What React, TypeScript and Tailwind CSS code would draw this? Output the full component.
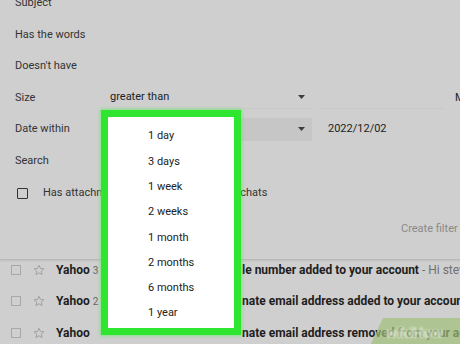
import React from "react";

const Arrow = () => (
  <svg width="7" height="4" viewBox="0 0 7 4" className="block">
    <polygon points="0,0 7,0 3.5,4" fill="#3d3d3d" />
  </svg>
);

const Star = () => (
  <svg width="12" height="12" viewBox="0 0 24 24" className="block">
    <polygon
      points="12,2.5 14.9,8.9 21.8,9.6 16.6,14.3 18.1,21.2 12,17.6 5.9,21.2 7.4,14.3 2.2,9.6 9.1,8.9"
      fill="none"
      stroke="#9c9c9c"
      strokeWidth="1.8"
      strokeLinejoin="round"
    />
  </svg>
);

const Row = ({ label, children }: { label: string; children?: React.ReactNode }) => (
  <div className="flex h-[31.5px] items-center">
    <div className="w-[110px] shrink-0 pl-[15px] text-[#333]">{label}</div>
    {children}
  </div>
);

const mails = [
  { n: "3", s: "le number added to your account", p: " - Hi steve, your Yahoo account" },
  { n: "2", s: "nate email address added to your account", p: " - Hi" },
  { n: "", s: "nate email address removed from your account", p: "" },
];

const items = ["1 day", "3 days", "1 week", "2 weeks", "1 month", "2 months", "6 months", "1 year"];

export default function App() {
  return (
    <div className="relative h-[344px] w-[460px] overflow-hidden bg-[#cfcfcf] font-['Roboto',sans-serif] text-[11px] text-[#2b2b2b]">
      <div className="relative z-10 -mt-[12.5px] border-b border-[#b8b8b8] bg-[#cfcfcf] pb-[9.5px] shadow-[0_1px_2px_rgba(0,0,0,0.08)]">
        <Row label="Subject" />
        <Row label="Has the words" />
        <Row label="Doesn't have" />
        <Row label="Size">
          <div className="flex h-[22px] w-[202px] shrink-0 items-center justify-between border-b border-[#c9c9c9] pr-[7px] text-[#222]">
            <span>greater than</span>
            <Arrow />
          </div>
          <div className="ml-[8px] h-[22px] w-[125px] shrink-0 border-b border-[#c9c9c9]" />
          <span className="ml-[10px] whitespace-nowrap text-[#222]">MB</span>
        </Row>
        <Row label="Date within">
          <div className="flex h-[23px] w-[202px] shrink-0 items-center justify-end bg-[#c6c6c6] pr-[7px]">
            <Arrow />
          </div>
          <span className="ml-[16px] whitespace-nowrap text-[#222]">2022/12/02</span>
        </Row>
        <Row label="Search">
          <span className="text-[#222]">All Mail</span>
        </Row>
        <div className="flex h-[33px] items-center pl-[17px]">
          <div className="flex w-[132px] shrink-0 items-center">
            <div className="h-[11px] w-[11px] rounded-[1px] border-[1.5px] border-[#333]" />
            <span className="ml-[15px] whitespace-nowrap text-[#333]">Has attachments</span>
          </div>
          <div className="h-[11px] w-[11px] rounded-[1px] border-[1.5px] border-[#333]" />
          <span className="ml-[15px] whitespace-nowrap text-[#333]">Don't include chats</span>
        </div>
        <div className="flex h-[40px] items-center whitespace-nowrap pl-[401px] text-[#8a8a8a]">
          Create filter
        </div>
      </div>

      <div className="-mt-[6px] text-[12px]">
        {mails.map((m, i) => (
          <div key={i} className="flex h-[31.5px] items-center whitespace-nowrap">
            <div className="ml-[11px] h-[10px] w-[10px] shrink-0 border border-[#a8a8a8]" />
            <div className="ml-[12px] shrink-0">
              <Star />
            </div>
            <div className="ml-[11px] w-[186px] shrink-0 font-bold text-[#1e1e1e]">
              Yahoo
              {m.n && <span className="ml-[3px] text-[10px] font-normal text-[#666]">{m.n}</span>}
            </div>
            <div className="text-[#1e1e1e]">
              <span className="font-bold">{m.s}</span>
              <span className="text-[#6f6f6f]">{m.p}</span>
            </div>
          </div>
        ))}
      </div>

      <div className="absolute left-[101px] top-[110px] z-20 h-[225px] w-[140px] border-[7px] border-[#2fe52f] bg-white shadow-[0_0_3px_1px_rgba(80,240,80,0.6)]">
        <div className="flex flex-col pl-[40px] pt-[7px]">
          {items.map((t) => (
            <div key={t} className="flex h-[25.3px] items-center whitespace-nowrap text-[#222]">
              {t}
            </div>
          ))}
        </div>
      </div>

      <div className="absolute left-[376px] top-[318px] z-30 flex h-[30px] w-[100px] -skew-x-[25deg] items-center bg-[#9fbf78]/70 pl-[10px]">
        <span className="skew-x-[25deg] whitespace-nowrap text-[15px] font-bold text-white/60 blur-[1px]">
          wikiHow
        </span>
      </div>
    </div>
  );
}
